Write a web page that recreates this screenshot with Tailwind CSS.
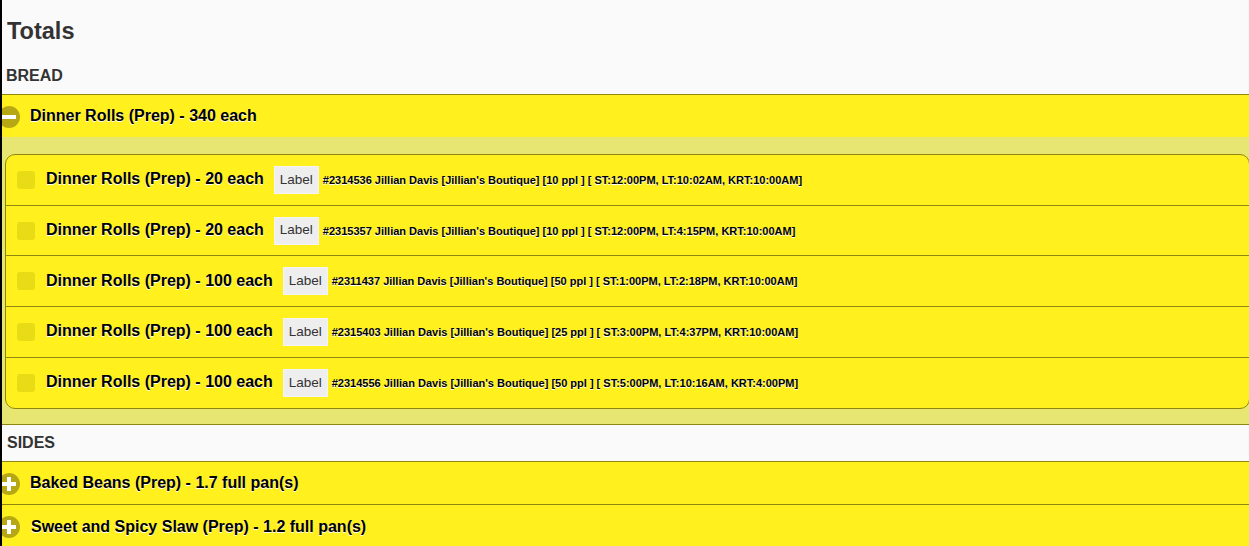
<!DOCTYPE html>
<html lang="en">
<head>
<title>Totals</title>
<meta charset="utf-8">
<script src="https://cdn.jsdelivr.net/npm/@tailwindcss/browser@4"></script>
</head>
<body class="h-[546px] overflow-hidden bg-[#fafafa] font-['Liberation_Sans',Arial,sans-serif] text-black">
<div class="border-l-2 border-black h-[546px] overflow-hidden">

  <h1 class="h-[62px] pl-[5px] pt-[17px] text-[23.5px] leading-7 font-bold text-[#333]">Totals</h1>
  <h2 class="h-[32px] pl-[4px] pt-[4px] text-base leading-5 font-bold text-[#333]">BREAD</h2>

  <!-- Bread -->
  <div class="border-t border-[#8f8610]">
    <div class="relative h-[42px] bg-[#fff01e] pl-[28px] flex items-center">
      <span class="absolute left-[-4px] top-[11px] size-[22px] rounded-full bg-[#b5a814] flex items-center justify-center">
        <svg width="14" height="14" viewBox="0 0 14 14"><rect x="0" y="5" width="14" height="4" fill="#fff"/></svg>
      </span>
      <span class="text-base font-bold [text-shadow:0_1px_0_#fff]">Dinner Rolls (Prep) - 340 each</span>
    </div>
    <div class="h-[288px] bg-[#e7e672] pl-[3px] pt-[17px] border-b border-[#8f8610]">
      <ul class="h-[255px] mr-[-1px] rounded-[10px] border border-[#8f8610] bg-[#fff01e] overflow-hidden">
        <li class="flex h-[51px] items-center pl-[11px] border-b border-[#8f8610]">
          <span class="size-[18px] rounded-[3px] bg-[#e8dc17]"></span>
          <span class="ml-[11px] mb-[2px] text-base font-bold [text-shadow:0_1px_0_#fff]">Dinner Rolls (Prep) - 20 each</span>
          <span class="ml-[10px] w-[45px] h-[28px] bg-[#eeeeee] border border-[#f4f4f4] flex items-center justify-center text-[13.5px] text-[#333]">Label</span>
          <span class="ml-[4px] mt-[1px] text-[11px] font-bold [text-shadow:0_1px_0_#fff]">#2314536 Jillian Davis [Jillian's Boutique] [10 ppl ] [ ST:12:00PM, LT:10:02AM, KRT:10:00AM]</span>
        </li>
        <li class="flex h-[50px] items-center pl-[11px] border-b border-[#8f8610]">
          <span class="size-[18px] rounded-[3px] bg-[#e8dc17]"></span>
          <span class="ml-[11px] mb-[2px] text-base font-bold [text-shadow:0_1px_0_#fff]">Dinner Rolls (Prep) - 20 each</span>
          <span class="ml-[10px] w-[45px] h-[28px] bg-[#eeeeee] border border-[#f4f4f4] flex items-center justify-center text-[13.5px] text-[#333]">Label</span>
          <span class="ml-[4px] mt-[1px] text-[11px] font-bold [text-shadow:0_1px_0_#fff]">#2315357 Jillian Davis [Jillian's Boutique] [10 ppl ] [ ST:12:00PM, LT:4:15PM, KRT:10:00AM]</span>
        </li>
        <li class="flex h-[51px] items-center pl-[11px] border-b border-[#8f8610]">
          <span class="size-[18px] rounded-[3px] bg-[#e8dc17]"></span>
          <span class="ml-[11px] text-base font-bold [text-shadow:0_1px_0_#fff]">Dinner Rolls (Prep) - 100 each</span>
          <span class="ml-[10px] w-[45px] h-[28px] bg-[#eeeeee] border border-[#f4f4f4] flex items-center justify-center text-[13.5px] text-[#333]">Label</span>
          <span class="ml-[4px] mt-[1px] text-[11px] font-bold [text-shadow:0_1px_0_#fff]">#2311437 Jillian Davis [Jillian's Boutique] [50 ppl ] [ ST:1:00PM, LT:2:18PM, KRT:10:00AM]</span>
        </li>
        <li class="flex h-[51px] items-center pl-[11px] border-b border-[#8f8610]">
          <span class="size-[18px] rounded-[3px] bg-[#e8dc17]"></span>
          <span class="ml-[11px] mb-[2px] text-base font-bold [text-shadow:0_1px_0_#fff]">Dinner Rolls (Prep) - 100 each</span>
          <span class="ml-[10px] w-[45px] h-[28px] bg-[#eeeeee] border border-[#f4f4f4] flex items-center justify-center text-[13.5px] text-[#333]">Label</span>
          <span class="ml-[4px] mt-[1px] text-[11px] font-bold [text-shadow:0_1px_0_#fff]">#2315403 Jillian Davis [Jillian's Boutique] [25 ppl ] [ ST:3:00PM, LT:4:37PM, KRT:10:00AM]</span>
        </li>
        <li class="flex h-[50px] items-center pl-[11px]">
          <span class="size-[18px] rounded-[3px] bg-[#e8dc17]"></span>
          <span class="ml-[11px] mb-[2px] text-base font-bold [text-shadow:0_1px_0_#fff]">Dinner Rolls (Prep) - 100 each</span>
          <span class="ml-[10px] w-[45px] h-[28px] bg-[#eeeeee] border border-[#f4f4f4] flex items-center justify-center text-[13.5px] text-[#333]">Label</span>
          <span class="ml-[4px] mt-[1px] text-[11px] font-bold [text-shadow:0_1px_0_#fff]">#2314556 Jillian Davis [Jillian's Boutique] [50 ppl ] [ ST:5:00PM, LT:10:16AM, KRT:4:00PM]</span>
        </li>
      </ul>
    </div>
  </div>

  <h2 class="h-[36px] pl-[5px] pt-[8px] text-base leading-5 font-bold text-[#333]">SIDES</h2>

  <!-- Sides -->
  <div class="border-t border-[#8f8610]">
    <div class="relative h-[43px] bg-[#fff01e] pl-[28px] flex items-center border-b border-[#8f8610]">
      <span class="absolute left-[-4px] top-[11px] size-[22px] rounded-full bg-[#b5a814] flex items-center justify-center">
        <svg width="14" height="14" viewBox="0 0 14 14"><path d="M5 0h4v5h5v4H9v5H5V9H0V5h5z" fill="#fff"/></svg>
      </span>
      <span class="text-base font-bold [text-shadow:0_1px_0_#fff]">Baked Beans (Prep) - 1.7 full pan(s)</span>
    </div>
    <div class="relative h-[42px] bg-[#fff01e] pl-[29px] flex items-center">
      <span class="absolute left-[-4px] top-[11px] size-[22px] rounded-full bg-[#b5a814] flex items-center justify-center">
        <svg width="14" height="14" viewBox="0 0 14 14"><path d="M5 0h4v5h5v4H9v5H5V9H0V5h5z" fill="#fff"/></svg>
      </span>
      <span class="mt-[2px] text-base font-bold [text-shadow:0_1px_0_#fff]">Sweet and Spicy Slaw (Prep) - 1.2 full pan(s)</span>
    </div>
  </div>
</div>
</body>
</html>
